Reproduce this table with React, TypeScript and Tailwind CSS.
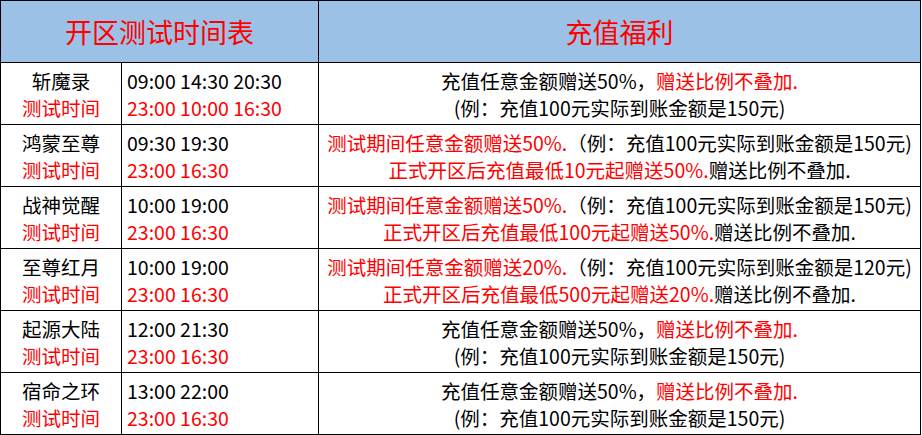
const RED = 'text-[#ff0000]';

type Row = {
  name: string;
  open: string;
  test: string;
  bonus: React.ReactNode;
};

function Standard() {
  return (
    <>
      <div>
        充值任意金额赠送50%，<span className={RED}>赠送比例不叠加.</span>
      </div>
      <div>(例：充值100元实际到账金额是150元)</div>
    </>
  );
}

function Phased({ test, min, result }: { test: string; min: string; result: string }) {
  return (
    <>
      <div>
        <span className={RED}>测试期间任意金额赠送{test}.</span>（例：充值100元实际到账金额是{result}元)
      </div>
      <div>
        <span className={RED}>
          正式开区后充值最低{min}元起赠送{test}.
        </span>
        赠送比例不叠加.
      </div>
    </>
  );
}

const ROWS: Row[] = [
  { name: '斩魔录', open: '09:00 14:30 20:30', test: '23:00 10:00 16:30', bonus: <Standard /> },
  {
    name: '鸿蒙至尊',
    open: '09:30 19:30',
    test: '23:00 16:30',
    bonus: <Phased test="50%" min="10" result="150" />,
  },
  {
    name: '战神觉醒',
    open: '10:00 19:00',
    test: '23:00 16:30',
    bonus: <Phased test="50%" min="100" result="150" />,
  },
  {
    name: '至尊红月',
    open: '10:00 19:00',
    test: '23:00 16:30',
    bonus: <Phased test="20%" min="500" result="120" />,
  },
  { name: '起源大陆', open: '12:00 21:30', test: '23:00 16:30', bonus: <Standard /> },
  { name: '宿命之环', open: '13:00 22:00', test: '23:00 16:30', bonus: <Standard /> },
];

export default function App() {
  return (
    <div className="min-h-screen bg-white">
      <div
        className="grid w-[921px] grid-cols-[121px_197px_602px] border-l border-t border-black text-[19.5px] leading-[27px] text-black"
        style={{ fontFamily: '"Noto Sans CJK SC", "Noto Sans", sans-serif' }}
      >
        {/* cabecera */}
        <div className="col-span-2 flex h-[62px] items-center justify-center border-b border-r border-black bg-[#9bc2e6] text-[27px] text-[#ff0000]">
          开区测试时间表
        </div>
        <div className="flex h-[62px] items-center justify-center border-b border-r border-black bg-[#9bc2e6] text-[27px] text-[#ff0000]">
          充值福利
        </div>

        {ROWS.map((r) => (
          <div key={r.name} className="contents">
            <div className="flex h-[62px] flex-col items-center justify-center border-b border-r border-black">
              <div>{r.name}</div>
              <div className={RED}>测试时间</div>
            </div>
            <div className="flex h-[62px] flex-col justify-center border-b border-r border-black pl-[5px]">
              <div>{r.open}</div>
              <div className={RED}>{r.test}</div>
            </div>
            <div className="flex h-[62px] flex-col items-center justify-center whitespace-nowrap border-b border-r border-black">
              {r.bonus}
            </div>
          </div>
        ))}
      </div>
    </div>
  );
}
